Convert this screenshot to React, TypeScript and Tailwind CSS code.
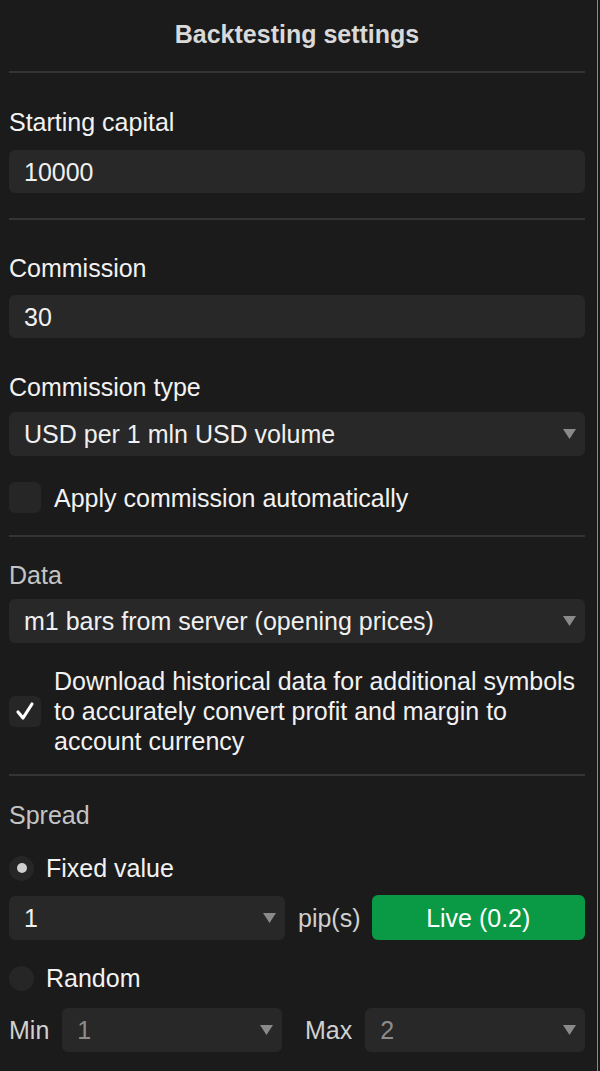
const Caret = () => (
  <svg width="13" height="10" viewBox="0 0 13 10" className="shrink-0">
    <path d="M0 0 H13 L6.5 10 Z" fill="#8a8a8a" />
  </svg>
);

function Select({ value, muted = false, className = '' }: { value: string; muted?: boolean; className?: string }) {
  return (
    <div
      className={`flex h-[44px] items-center justify-between rounded-[6px] bg-[#282828] pl-[15px] pr-[9px] ${
        muted ? 'text-[#8c8c8c]' : 'text-[#f0f0f0]'
      } ${className}`}
    >
      <span>{value}</span>
      <Caret />
    </div>
  );
}

function Input({ value }: { value: string }) {
  return (
    <div className="flex h-[43px] items-center rounded-[6px] bg-[#282828] pl-[15px] text-[#f0f0f0]">{value}</div>
  );
}

const Divider = () => <div className="h-[2px] bg-[#343434]" />;

function Checkbox({ checked }: { checked: boolean }) {
  return (
    <div className="flex h-[31px] w-[32px] shrink-0 items-center justify-center rounded-[6px] bg-[#262626]">
      {checked && (
        <svg width="20" height="20" viewBox="0 0 20 20">
          <path d="M3 11 L8 17 L17 3" fill="none" stroke="#ffffff" strokeWidth="3.2" strokeLinecap="round" strokeLinejoin="round" />
        </svg>
      )}
    </div>
  );
}

function Radio({ checked, label }: { checked: boolean; label: string }) {
  return (
    <div className="flex h-[30px] items-center gap-[12px]">
      <div className="flex h-[25px] w-[25px] items-center justify-center rounded-full bg-[#262626]">
        {checked && <div className="h-[10px] w-[10px] rounded-full bg-[#cfcfcf]" />}
      </div>
      <span className="text-[#f2f2f2]">{label}</span>
    </div>
  );
}

export default function App() {
  return (
    <div
      className="flex min-h-[1071px] w-[600px] bg-[#1b1b1b] text-[25px] leading-[30px]"
      style={{ fontFamily: '"Liberation Sans", Arial, sans-serif' }}
    >
      <div className="flex w-[597px] flex-col pl-[9px] pr-[12px]">
        <h1 className="mt-[19px] text-center font-bold text-[#d9d9d9]">Backtesting settings</h1>
        <div className="mt-[22px]">
          <Divider />
        </div>

        <p className="mt-[34px] text-[#f2f2f2]">Starting capital</p>
        <div className="mt-[13px]">
          <Input value="10000" />
        </div>
        <div className="mt-[25px]">
          <Divider />
        </div>

        <p className="mt-[33px] text-[#f2f2f2]">Commission</p>
        <div className="mt-[12px]">
          <Input value="30" />
        </div>
        <p className="mt-[34px] text-[#f2f2f2]">Commission type</p>
        <Select value="USD per 1 mln USD volume" className="mt-[10px]" />
        <div className="mt-[26px] flex items-center gap-[13px]">
          <Checkbox checked={false} />
          <span className="text-[#f2f2f2]">Apply commission automatically</span>
        </div>
        <div className="mt-[22px]">
          <Divider />
        </div>

        <p className="mt-[23px] text-[#c4c4c4]">Data</p>
        <Select value="m1 bars from server (opening prices)" className="mt-[9px]" />
        <div className="mt-[23px] flex items-center gap-[13px]">
          <Checkbox checked />
          <span className="text-[#f2f2f2]">
            Download historical data for additional symbols to accurately convert profit and margin to account currency
          </span>
        </div>
        <div className="mt-[18px]">
          <Divider />
        </div>

        <p className="mt-[24px] text-[#c4c4c4]">Spread</p>
        <div className="mt-[23px]">
          <Radio checked label="Fixed value" />
        </div>
        <div className="mt-[12px] flex items-center">
          <Select value="1" className="w-[276px]" />
          <span className="ml-[13px] text-[#d0d0d0]">pip(s)</span>
          <button
            type="button"
            className="ml-[11px] flex h-[45px] flex-1 items-center justify-center rounded-[6px] bg-[#0a9a46] text-white"
          >
            Live (0.2)
          </button>
        </div>
        <div className="mt-[23px]">
          <Radio checked={false} label="Random" />
        </div>
        <div className="mt-[15px] flex gap-[23px]">
          <div className="flex w-[273px] items-center gap-[13px]">
            <span className="text-[#d0d0d0]">Min</span>
            <Select value="1" muted className="flex-1" />
          </div>
          <div className="flex flex-1 items-center gap-[13px]">
            <span className="text-[#d0d0d0]">Max</span>
            <Select value="2" muted className="flex-1" />
          </div>
        </div>
      </div>
      <div className="w-[1px] bg-[#8a8a8a]" />
      <div className="flex-1 bg-[#1b1b1b]" />
    </div>
  );
}
